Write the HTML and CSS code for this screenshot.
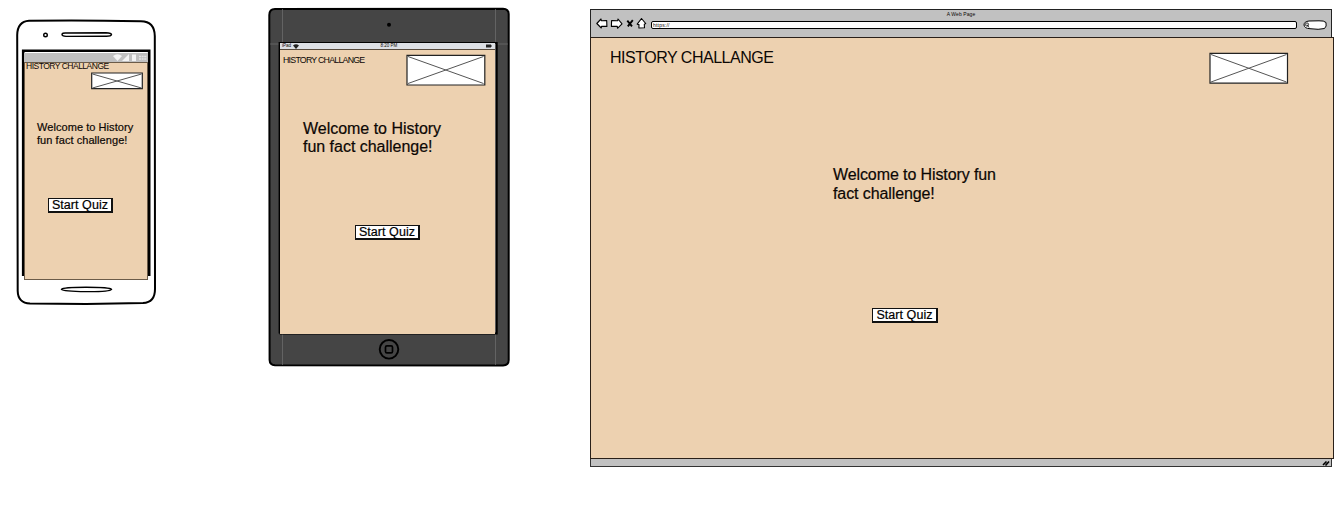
FILE: index.html
```html
<!DOCTYPE html>
<html lang="en">
<head>
<meta charset="utf-8">
<title>History Challange wireframes</title>
<link rel="stylesheet" href="styles.css">
</head>
<body>
<main class="board">

  <section class="device phone">
    <svg class="frame" viewBox="0 0 140 286" width="140" height="286">
      <path d="M13 1.800 Q60 .8 125 2.200 Q138.600 2.500 138.800 17 L139 270 Q139 283.500 127 284 L70 285 L14 284.500 Q2 284 1.700 272 L1.200 16 Q1.500 2.500 13 1.800Z" fill="#fff" stroke="#000" stroke-width="2"/>
      <circle cx="29.500" cy="16" r="1.800" fill="#fff" stroke="#000" stroke-width="1.400"/>
      <path d="M46 15.500 Q46 13.800 50 14 L90 13.800 Q95.500 14 95.500 15.500 Q95 17.300 90 17.200 L50 17.400 Q46 17 46 15.500Z" fill="#fff" stroke="#000" stroke-width="1.400"/>
      <path d="M45.500 270.300 Q47 268.300 70 268.300 Q94 268.300 95.500 270.300 Q94 272.800 70 272.600 Q47 272.300 45.500 270.300Z" fill="#fff" stroke="#000" stroke-width="1.400"/>
      <path d="M7.200 257 V31.800 H133.200 V257" fill="none" stroke="#000" stroke-width="2.600"/>
    </svg>
    <div class="screen">
      <div class="statusbar">
        <svg viewBox="0 0 38 9" width="38" height="9">
          <g fill="#f3f3f3"><path d="M3 3 Q7.500 -.5 12 3 L7.500 8Z"/><path d="M12 8 L19 1 V8Z"/><path d="M22 1.500 H26 V8 H22Z"/></g>
          <path d="M29 3.500 H37 M29 6 H37" stroke="#e5e5e5" stroke-width="1.500" stroke-dasharray="2 .6"/>
        </svg>
      </div>
      <div class="page">
        <h1 class="title">HISTORY CHALLANGE</h1>
        <svg class="image" viewBox="0 0 52 18" width="52" height="18"><path class="imagebox" d="M.7 1 H51.300 V16.700 H.7Z"/><path class="cross" d="M1.500 2 L50.500 16 M1.500 16 L50.500 2"/></svg>
        <p class="welcome">Welcome to History<br>fun fact challenge!</p>
        <button class="start">Start Quiz</button>
      </div>
    </div>
  </section>

  <section class="device tablet">
    <svg class="frame" viewBox="0 0 242 360" width="242" height="360">
      <path d="M7 1.900 L235 1.700 Q240.700 1.900 240.700 7 L240.700 353 Q240.700 358.300 235 358.400 L7 358.200 Q1.700 358 1.600 353 L1.300 8 Q1.300 2 7 1.900Z" fill="#454545" stroke="#000" stroke-width="2"/>
      <path d="M14.500 2 V358 M227.500 2 V358 M2 37 H240" stroke="#707070" stroke-width=".7"/>
      <circle cx="121" cy="17.800" r="2" fill="#000"/>
      <path d="M11.500 326.500 V35.800 H228.800 V326.500 H11.500" fill="none" stroke="#000" stroke-width="1.800"/>
      <circle cx="121" cy="342.300" r="9.300" fill="none" stroke="#000" stroke-width="1.900"/>
      <rect x="117.500" y="338.800" width="7" height="7" rx="1.400" fill="none" stroke="#000" stroke-width="1.700"/>
    </svg>
    <div class="screen">
      <div class="statusbar">
        <span class="carrier">iPad
          <svg viewBox="0 0 6 5" width="6" height="5"><path d="M0 1.500 Q3 -1 6 1.500 L3 5Z" fill="#222"/></svg>
        </span>
        <span class="clock">8:20 PM</span>
        <svg class="battery" viewBox="0 0 6 4" width="6" height="4"><path d="M0 .5 H5 V1.500 H6 V2.500 H5 V3.500 H0Z" fill="#222"/></svg>
      </div>
      <div class="page">
        <header class="head">
          <h1 class="title">HISTORY CHALLANGE</h1>
          <svg class="image" viewBox="0 0 80 32" width="80" height="32"><path class="imagebox" d="M1 1.300 H78.800 V31 H1Z"/><path class="cross" d="M2 2.500 L77.500 29.500 M2 29.500 L77.500 2.500"/></svg>
        </header>
        <p class="welcome">Welcome to History<br>fun fact challenge!</p>
        <button class="start">Start Quiz</button>
      </div>
    </div>
  </section>

  <section class="device browser">
    <div class="chrome">
      <div class="caption">A Web Page</div>
      <div class="toolbar">
        <svg class="nav" viewBox="0 0 52 14" width="52" height="14">
          <g fill="#fff" stroke="#000" stroke-width="1.100" stroke-linejoin="round">
            <path d="M.8 6.500 L5 2 L5.300 3.700 L10.700 3.600 L10.900 9.400 L5.500 9.200 L5.300 11Z"/>
            <path d="M26 6.800 L22 2 L21.700 3.700 L15.600 3.600 L15.400 9.400 L21.300 9.400 L21.500 11.300Z"/>
            <path d="M45.500 1.500 L49.700 6.500 L48.300 7.300 L48.500 10.700 L42.900 11 L43 7.600 L41.200 7.200Z"/>
          </g>
          <path d="M31.300 3.700 L36 9.300 M36.800 3.200 L31.800 9.300" stroke="#000" stroke-width="1.900"/>
        </svg>
        <div class="address">https://</div>
        <svg class="search" viewBox="0 0 25 11" width="25" height="11"><path d="M6 1 Q1 1.500 1 5 Q1.500 8.500 7 8.700 Q16 10 21.500 8.500 Q24 6.500 23 2.500 Q21 .5 16 .8Z" fill="#fff" stroke="#000"/><circle cx="4" cy="4.500" r="1.600" fill="none" stroke="#000" stroke-width=".8"/><path d="M4 4.500 L6 7.500" stroke="#000" stroke-width=".8"/></svg>
      </div>
    </div>
    <div class="page">
      <header class="head">
        <h1 class="title">HISTORY CHALLANGE</h1>
        <svg class="image" viewBox="0 0 80 32" width="80" height="32"><path class="imagebox" d="M1 1.300 H78.500 V31.200 H1Z"/><path class="cross" d="M2 2.500 L77.500 30 M2 30 L77.500 2.500"/></svg>
      </header>
      <p class="welcome">Welcome to History fun<br>fact challenge!</p>
      <button class="start">Start Quiz</button>
    </div>
    <div class="footer"><svg viewBox="0 0 8 7" width="8" height="7"><path d="M1 6 L4.500 2.500 M3.500 6.500 L7 2.500" stroke="#000" stroke-width="1.600"/></svg></div>
  </section>

</main>
</body>
</html>
```
FILE: styles.css
```css
* { box-sizing: border-box; }
body { margin: 0; background: #fff; color: #0c0704; font-family: "Liberation Sans", Arial, sans-serif; }
h1, p { margin: 0; font-weight: 400; white-space: nowrap; }
svg { display: block; flex: none; }

.board { display: flex; align-items: flex-start; width: 1344px; height: 515px; overflow: hidden; }
.device { position: relative; flex: none; }
.frame { position: absolute; left: 0; top: 0; }
.screen { position: relative; }
.page { background: #edd1b0; display: flex; flex-direction: column; align-items: flex-start; }
.head { display: flex; align-items: flex-start; justify-content: space-between; width: 100%; }
.imagebox { fill: #fff; stroke: #222; stroke-width: 1.2; }
.cross { fill: none; stroke: #555; stroke-width: 1; }
.welcome, .start { -webkit-text-stroke: .2px currentColor; }
.start {
  width: 65px; height: 15px; padding: 0;
  border: 1px solid #111; border-right-width: 2px; border-bottom-width: 2px;
  background: #fff; color: #000;
  font: 12.5px/12px "Liberation Sans", Arial, sans-serif; letter-spacing: .05px; white-space: nowrap;
}

.phone { width: 140px; height: 286px; margin: 19px 0 0 16px; padding: 34px 0 0 8px; }
.phone .screen { width: 124px; }
.phone .statusbar { height: 9px; background: #c0c0c0; display: flex; justify-content: flex-end; }
.phone .page { height: 218px; border: 1px solid #6b5b48; }
.phone .title { font-size: 8.5px; line-height: 6px; letter-spacing: -.5px; padding-left: 1px; margin-bottom: 3px; }
.phone .image { align-self: flex-end; margin-right: 4px; }
.phone .welcome { font-size: 11px; line-height: 13px; letter-spacing: .06px; margin: 31px 0 0 12px; }
.phone .start { margin: 51px 0 0 23px; }

.tablet { width: 242px; height: 360px; margin: 7px 0 0 112px; padding: 36px 0 0 12px; }
.tablet .screen { width: 215px; }
.tablet .statusbar { height: 6px; padding: 0 3px 0 2px; background: #dcdfe4; display: grid; grid-template-columns: 1fr auto 1fr; align-items: center; font-size: 4.5px; line-height: 6px; }
.tablet .carrier { display: flex; align-items: center; gap: 2px; }
.tablet .clock { padding-left: 4px; }
.tablet .battery { justify-self: end; }
.tablet .page { height: 285px; border-top: 1px solid #55483a; }
.tablet .head { padding: 4px 9px 0 3px; }
.tablet .title { font-size: 8.8px; line-height: 11px; letter-spacing: -.76px; padding-top: 1px; }
.tablet .welcome { font-size: 16px; line-height: 18px; letter-spacing: -.02px; margin: 34px 0 0 23px; }
.tablet .start { margin: 69px 0 0 75px; }

.browser { width: 745px; margin: 9px 0 0 80px; }
.chrome { width: 742px; height: 28px; border: 1px solid #222; border-bottom: 0; background: #c1c1c1; }
.caption { height: 8px; font-size: 5px; line-height: 9px; letter-spacing: .1px; text-align: center; }
.toolbar { display: flex; align-items: center; height: 12px; padding: 0 3px 0 5px; }
.address { flex: 1; height: 8px; margin: 2px 6px 0 3px; padding-left: 1px; border: 1px solid #000; border-radius: 2px; background: #fff; font-size: 5px; line-height: 6px; letter-spacing: .2px; }
.search { margin-top: 2px; }
.browser .page { width: 744px; height: 422px; border: 1px solid #2a2019; }
.browser .head { padding: 14px 44px 0 19px; }
.browser .title { font-size: 16px; line-height: 12px; letter-spacing: -.48px; }
.browser .welcome { font-size: 16px; line-height: 19px; letter-spacing: -.1px; margin: 81px 0 0 242px; }
.browser .start { width: 66px; margin: 105px 0 0 281px; }
.footer { width: 742px; height: 8px; padding-right: 1px; border: 1px solid #333; border-top: 0; background: #c1c1c1; display: flex; justify-content: flex-end; }
```
